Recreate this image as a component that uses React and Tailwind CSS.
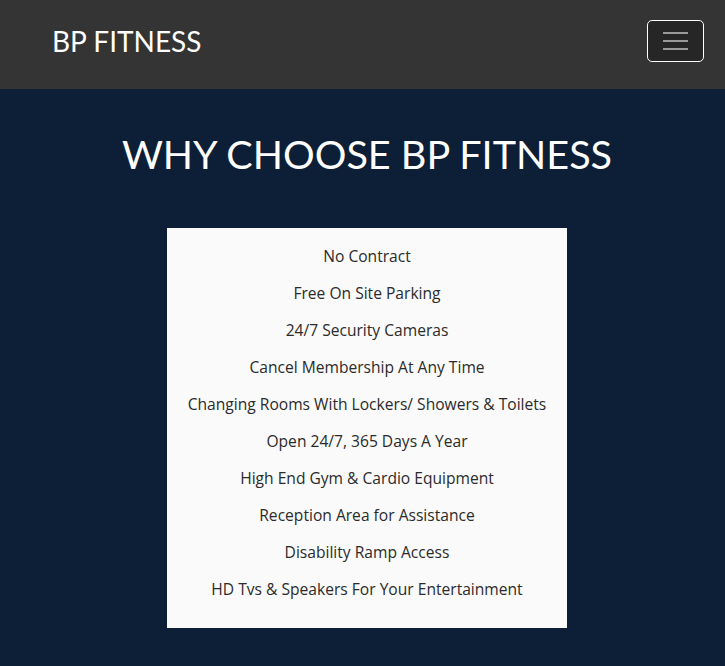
import React from "react";

const features = [
  "No Contract",
  "Free On Site Parking",
  "24/7 Security Cameras",
  "Cancel Membership At Any Time",
  "Changing Rooms With Lockers/ Showers & Toilets",
  "Open 24/7, 365 Days A Year",
  "High End Gym & Cardio Equipment",
  "Reception Area for Assistance",
  "Disability Ramp Access",
  "HD Tvs & Speakers For Your Entertainment",
];

const App = () => {
  return (
    <div className="min-h-[666px] bg-[#0d1f36] font-['Lato',sans-serif]">
      <nav className="h-[89px] bg-[#343434] flex items-center justify-between pl-[52px] pr-[21px] pb-[8px]">
        <span className="text-white text-[28px] leading-none">BP FITNESS</span>
        <button className="w-[57px] h-[42px] rounded-[5px] border border-white bg-[#262626] flex flex-col items-center justify-center gap-[6px]">
          <span className="block w-[25px] h-[2px] bg-[#9a9a9a]"></span>
          <span className="block w-[25px] h-[2px] bg-[#9a9a9a]"></span>
          <span className="block w-[25px] h-[2px] bg-[#9a9a9a]"></span>
        </button>
      </nav>

      <section className="pt-[45px] pb-10 pl-[9px] flex flex-col items-center">
        <h1 className="text-white text-[39.6px] leading-[40px] mb-[54px]">
          WHY CHOOSE BP FITNESS
        </h1>
        <div className="w-[400px] bg-[#fafafa] pt-[10px] pb-[20px] flex flex-col items-center font-['Open_Sans',sans-serif] font-medium text-[15.6px] text-[#2b2b2b]">
          {features.map((item) => (
            <p key={item} className="h-[37px] leading-[37px]">
              {item}
            </p>
          ))}
        </div>
      </section>
    </div>
  );
};

export default App;
